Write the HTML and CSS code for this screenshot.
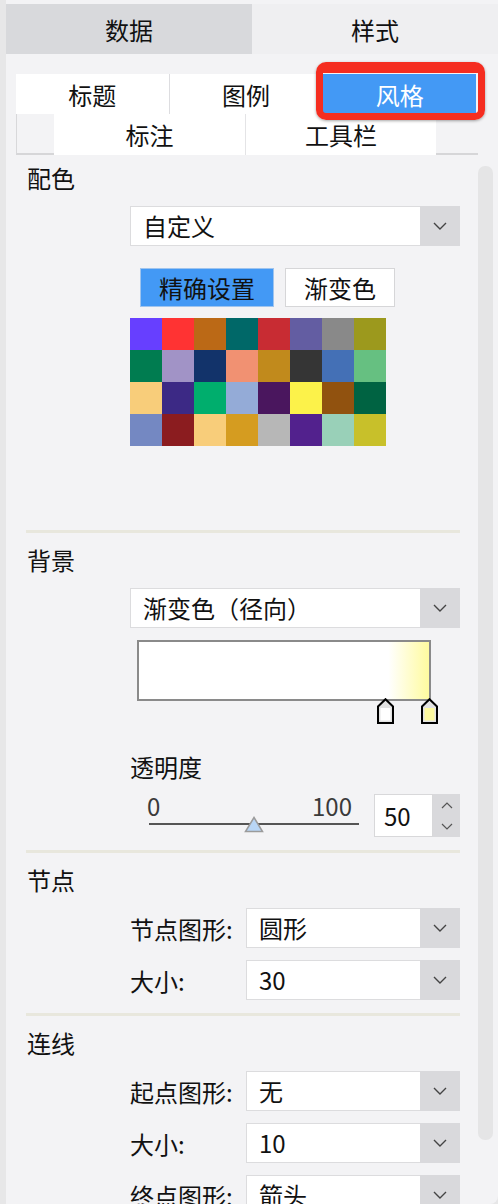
FILE: index.html
```html
<!DOCTYPE html>
<html lang="zh-CN">
<head>
  <meta charset="UTF-8" />
  <meta name="viewport" content="width=device-width, initial-scale=1.0"/>
  <title>样式设置</title>
  <link rel="stylesheet" href="styles.css">
</head>
<body>
  <div class="app">
    <div class="main-tabs">
      <div class="main-tab active">数据</div>
      <div class="main-tab">样式</div>
    </div>

    <div class="sub-tabs">
      <div class="tab-row first">
        <div class="sub-tab">标题</div>
        <div class="sub-tab">图例</div>
        <div class="sub-tab selected">风格</div>
      </div>
      <div class="tab-row second">
        <div class="sub-tab">标注</div>
        <div class="sub-tab">工具栏</div>
      </div>
    </div>

    <div class="scroll-area">
      <div class="settings">

        <div class="section">
          <h3>配色</h3>
          <div class="select wide">
            <span class="select-value">自定义</span>
            <span class="select-arrow"><svg width="14" height="8" viewBox="0 0 14 8"><polyline points="1,1 7,7 13,1" fill="none" stroke="#444" stroke-width="1.4"/></svg></span>
          </div>
          <div class="seg">
            <div class="seg-btn on">精确设置</div>
            <div class="seg-btn">渐变色</div>
          </div>
          <div class="palette" id="palette"></div>
        </div>

        <div class="section">
          <h3>背景</h3>
          <div class="select wide">
            <span class="select-value">渐变色（径向）</span>
            <span class="select-arrow"><svg width="14" height="8" viewBox="0 0 14 8"><polyline points="1,1 7,7 13,1" fill="none" stroke="#444" stroke-width="1.4"/></svg></span>
          </div>
          <div class="gradient">
            <div class="gradient-bar"></div>
            <svg class="stop" style="left: 240px" width="17" height="26" viewBox="0 0 17 26"><polygon points="8.5,1.2 16,8.5 16,25 1,25 1,8.5" fill="#e2e2e2" stroke="#000" stroke-width="2"/><rect x="3.5" y="10" width="10" height="12.5" fill="#fff"/></svg>
            <svg class="stop" style="left: 284px" width="17" height="26" viewBox="0 0 17 26"><polygon points="8.5,1.2 16,8.5 16,25 1,25 1,8.5" fill="#e2e2e2" stroke="#000" stroke-width="2"/><rect x="3.5" y="10" width="10" height="12.5" fill="#fdf99f"/></svg>
          </div>
          <div class="opacity-label">透明度</div>
          <div class="slider-row">
            <div class="slider">
              <div class="slider-labels"><span>0</span><span>100</span></div>
              <div class="slider-track">
                <svg class="thumb" width="20" height="17" viewBox="0 0 20 17"><polygon points="10,1.5 18.5,15.5 1.5,15.5" fill="#b9d6f6" stroke="#9b9b9b" stroke-width="1.5"/></svg>
              </div>
            </div>
            <div class="number">
              <div class="number-value">50</div>
              <div class="number-spin">
                <svg width="12" height="7" viewBox="0 0 12 7"><polyline points="1,6 6,1 11,6" fill="none" stroke="#555" stroke-width="1.2"/></svg>
                <svg width="12" height="7" viewBox="0 0 12 7"><polyline points="1,1 6,6 11,1" fill="none" stroke="#555" stroke-width="1.2"/></svg>
              </div>
            </div>
          </div>
        </div>

        <div class="section">
          <h3>节点</h3>
          <div class="field">
            <label>节点图形:</label>
            <div class="select">
              <span class="select-value">圆形</span>
              <span class="select-arrow"><svg width="14" height="8" viewBox="0 0 14 8"><polyline points="1,1 7,7 13,1" fill="none" stroke="#444" stroke-width="1.4"/></svg></span>
            </div>
          </div>
          <div class="field">
            <label>大小:</label>
            <div class="select">
              <span class="select-value">30</span>
              <span class="select-arrow"><svg width="14" height="8" viewBox="0 0 14 8"><polyline points="1,1 7,7 13,1" fill="none" stroke="#444" stroke-width="1.4"/></svg></span>
            </div>
          </div>
        </div>

        <div class="section last">
          <h3>连线</h3>
          <div class="field">
            <label>起点图形:</label>
            <div class="select">
              <span class="select-value">无</span>
              <span class="select-arrow"><svg width="14" height="8" viewBox="0 0 14 8"><polyline points="1,1 7,7 13,1" fill="none" stroke="#444" stroke-width="1.4"/></svg></span>
            </div>
          </div>
          <div class="field">
            <label>大小:</label>
            <div class="select">
              <span class="select-value">10</span>
              <span class="select-arrow"><svg width="14" height="8" viewBox="0 0 14 8"><polyline points="1,1 7,7 13,1" fill="none" stroke="#444" stroke-width="1.4"/></svg></span>
            </div>
          </div>
          <div class="field">
            <label>终点图形:</label>
            <div class="select">
              <span class="select-value">箭头</span>
              <span class="select-arrow"><svg width="14" height="8" viewBox="0 0 14 8"><polyline points="1,1 7,7 13,1" fill="none" stroke="#444" stroke-width="1.4"/></svg></span>
            </div>
          </div>
        </div>

      </div>
      <div class="scrollbar"></div>
    </div>
  </div>

  <script>
    const colors = [
      "#673fff", "#ff3333", "#bb6916", "#006868", "#c82c33", "#635da2", "#898989", "#9c991d",
      "#007c50", "#a193c6", "#12336a", "#f19172", "#c18a1c", "#353535", "#4470b6", "#66c081",
      "#f8cd7a", "#3c2985", "#00ae6d", "#94abd7", "#4a165e", "#fcf24a", "#91520f", "#006342",
      "#7488c2", "#8b1c1f", "#f8cd7a", "#d59c20", "#b7b7b7", "#52218d", "#99d0b8", "#c8c02a"
    ];
    const palette = document.getElementById("palette");
    colors.forEach(c => {
      const cell = document.createElement("div");
      cell.className = "swatch";
      cell.style.background = c;
      palette.appendChild(cell);
    });
  </script>
</body>
</html>
```

FILE: styles.css
```css
html, body {
  margin: 0;
  height: 100%;
  overflow: hidden;
}
body {
  background: #e7e7e8;
  font-family: "Noto Sans CJK SC", "Noto Sans", sans-serif;
  font-size: 24px;
  color: #111;
}
.app {
  margin-left: 6px;
  height: 100%;
  padding-top: 4px;
  box-sizing: border-box;
  background: #f3f3f5;
  border-bottom-right-radius: 8px;
  overflow: hidden;
}

/* top tabs */
.main-tabs {
  display: flex;
  height: 50px;
}
.main-tab {
  flex: 1;
  display: flex;
  align-items: center;
  justify-content: center;
  background: #efeff1;
}
.main-tab.active {
  background: #d8d9dc;
}

/* sub tabs */
.sub-tabs {
  margin: 20px 20px 0 10px;
}
.tab-row {
  display: flex;
}
.tab-row.first {
  width: 460px;
  height: 40px;
}
.tab-row.first .sub-tab {
  flex: 1;
}
.tab-row.first .sub-tab + .sub-tab {
  border-left: 1px solid #dddde0;
}
.tab-row.second {
  height: 39px;
  padding-left: 37px;
  border-left: 1px solid #d8d8da;
  border-bottom: 2px solid #d6d6d8;
}
.tab-row.second .sub-tab {
  width: 191px;
  height: 41px;
}
.tab-row.second .sub-tab + .sub-tab {
  border-left: 1px solid #e4e4e6;
}
.sub-tab {
  display: flex;
  align-items: center;
  justify-content: center;
  background: #fff;
  box-sizing: border-box;
}
.sub-tab.selected {
  position: relative;
  background: #4399f5;
  color: #fff;
  z-index: 2;
}
.sub-tab.selected::after {
  content: "";
  position: absolute;
  top: -12px;
  left: -7px;
  right: -9px;
  bottom: -6px;
  border: 7px solid #f52d20;
  border-top-width: 11px;
  border-radius: 10px;
  box-shadow: 0 1px 3px rgba(0, 0, 0, 0.35);
}

/* settings list */
.scroll-area {
  display: flex;
  margin-left: 10px;
}
.settings {
  width: 434px;
  padding: 0 18px 0 10px;
}
.scrollbar {
  width: 15px;
  height: 974px;
  margin-top: 11px;
  border-radius: 7px;
  background: #e5e5e6;
}
.section {
  padding: 10px 0 13px;
  border-bottom: 3px solid #e8e7dd;
}
.section:first-child {
  padding-top: 6px;
  padding-bottom: 84px;
}
.section.last {
  border-bottom: 0;
}
.section h3 {
  margin: 0;
  font-size: 24px;
  font-weight: normal;
  line-height: 34px;
  padding-left: 1px;
}

.select {
  display: flex;
  height: 40px;
  box-sizing: border-box;
  background: #fff;
  border: 1px solid #dcdcde;
  border-right: 0;
}
.select.wide {
  width: 330px;
  margin: 11px 0 0 104px;
}
.select-value {
  flex: 1;
  padding-left: 12px;
  line-height: 38px;
  white-space: nowrap;
}
.select-arrow {
  width: 40px;
  margin: -1px 0;
  display: flex;
  align-items: center;
  justify-content: center;
  background: #d9d9dc;
}

.seg {
  display: flex;
  gap: 11px;
  margin: 22px 0 0 114px;
}
.seg-btn {
  height: 39px;
  padding: 0 18px;
  line-height: 37px;
  background: #fff;
  border: 1px solid #d6d6d8;
  box-sizing: border-box;
}
.seg-btn.on {
  background: #4399f5;
  border-color: #9fc4ee;
}

.palette {
  display: grid;
  grid-template-columns: repeat(8, 32px);
  grid-auto-rows: 32px;
  margin: 11px 0 0 104px;
  width: 256px;
}

.gradient {
  position: relative;
  width: 294px;
  margin: 12px 0 0 111px;
}
.gradient-bar {
  height: 61px;
  box-sizing: border-box;
  border: 2px solid #8a8a8a;
  background: linear-gradient(to right, #fff 86%, #fffb9f 100%);
}
.stop {
  position: absolute;
  top: 58px;
}

.opacity-label {
  margin: 49px 0 0 104px;
  line-height: 34px;
}
.slider-row {
  display: flex;
  margin: 10px 0 0 121px;
}
.slider {
  width: 212px;
}
.slider-labels {
  display: flex;
  justify-content: space-between;
  padding-right: 7px;
  line-height: 24px;
  color: #3a3a3a;
}
.slider-track {
  position: relative;
  height: 19px;
}
.slider-track::before {
  content: "";
  position: absolute;
  top: 5px;
  left: 2px;
  right: 0;
  height: 2px;
  background: #555;
}
.thumb {
  position: absolute;
  left: 97px;
  top: -2px;
}
.number {
  display: flex;
  margin-left: 15px;
  height: 43px;
}
.number-value {
  width: 59px;
  box-sizing: border-box;
  padding-left: 9px;
  line-height: 41px;
  background: #fff;
  border: 1px solid #d8d8da;
}
.number-spin {
  width: 27px;
  display: flex;
  flex-direction: column;
  align-items: center;
  justify-content: center;
  gap: 14px;
  background: #d9d9dc;
}

.field {
  display: flex;
  align-items: center;
  margin: 12px 0 0 104px;
}
.section h3 + .field {
  margin-top: 11px;
}
.field label {
  width: 116px;
  white-space: nowrap;
}
.field .select {
  width: 214px;
}
```
